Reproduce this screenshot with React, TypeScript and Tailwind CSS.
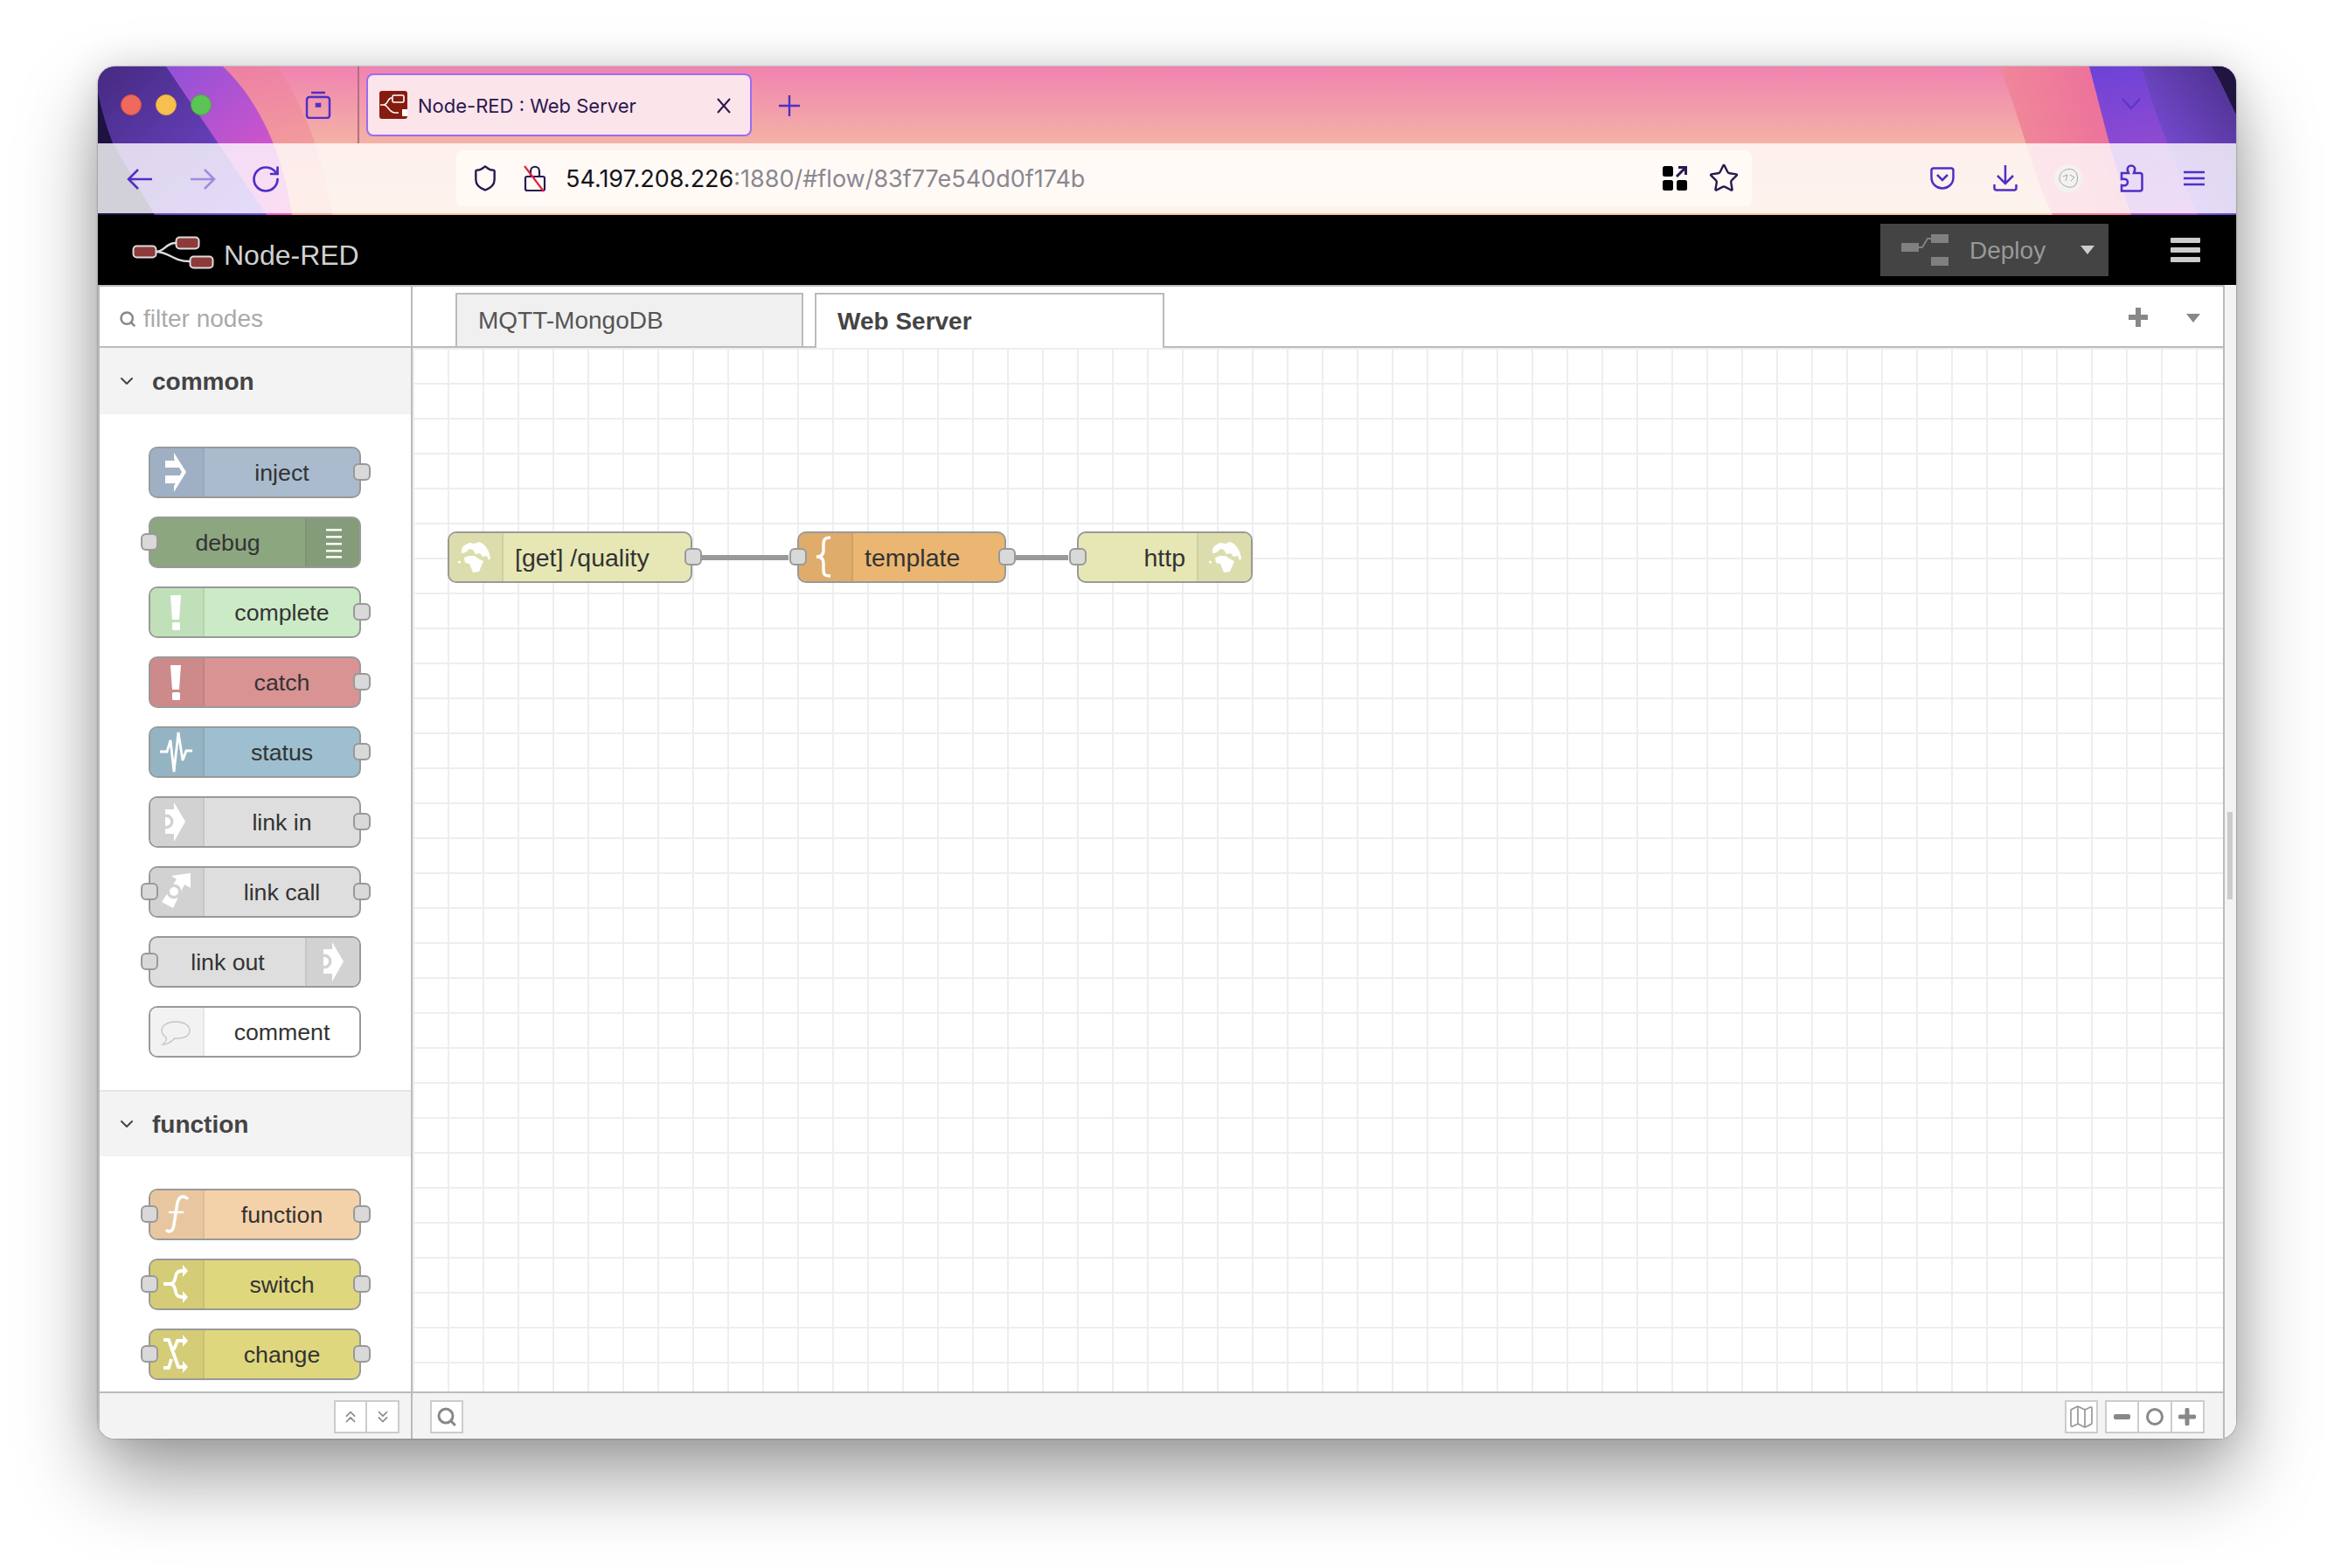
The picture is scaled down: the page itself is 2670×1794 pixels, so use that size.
import type { ReactNode } from 'react'
import { ChevronDown, ChevronsDown, ChevronsUp, Map as MapIcon, RotateCw, Search, Shield, Star } from 'lucide-react'

const sans = "font-['Liberation_Sans',Arial,sans-serif]"

const Globe = () => (
  <g fill="#fff">
    <path d="M16 20 L19 16 L25 13 L31 14 L36 12 C43 14 48 22 49 31 L47 33 L45 28 L40 29 L37 25 L32 26 L29 21 L25 20 L21 24 L16 25Z" />
    <path d="M19 30 L24 28 L31 28 L35 31 L41 34 L39 39 L36 46 L29 47 L27 42 L25 37 L20 36Z" />
    <circle cx="13.5" cy="35" r="1.6" />
  </g>
)

const LinkArrow = ({ bg }: { bg: string }) => (
  <g>
    <path d="M29 7 L42 29 L29 52 V43 H19 V15 H29Z" fill="#fff" />
    <circle cx="20" cy="29" r="8.5" fill={bg} />
    <path d="M19 24 H20 A5 5 0 0 1 20 34 H19Z" fill="#fff" />
    <rect x="10" y="10" width="9" height="40" fill={bg} />
  </g>
)

const icons: Record<string, (bg: string) => ReactNode> = {
  inject: () => (
    <g fill="#fff">
      <path d="M19 16 H33 L36 24 H19Z M19 33 H36 L33 42 H19Z" />
      <path d="M29 7 L43 29 L29 52 V45 L38 29 L29 14Z" />
    </g>
  ),
  debug: () => (
    <g fill="#fff">
      <rect x="22" y="14" width="18" height="2.5" />
      <rect x="22" y="22" width="18" height="2.5" />
      <rect x="22" y="30" width="18" height="2.5" />
      <rect x="22" y="38" width="18" height="2.5" />
      <rect x="22" y="45" width="18" height="2.5" />
    </g>
  ),
  alert: () => (
    <g fill="#fff">
      <path d="M25 10 H37 L35 38 H27Z" />
      <rect x="27" y="41" width="9" height="9" rx="1.5" />
    </g>
  ),
  status: () => (
    <path d="M13 29 H21 L25 16 L29 52 L34 7 L39 39 L43 28 H50" fill="none" stroke="#fff" strokeWidth="2.8" />
  ),
  link: bg => <LinkArrow bg={bg} />,
  linkCall: bg => (
    <g>
      <path d="M26 11 L48 8 L48 25 L41 21 L28 48 L15 41 L32 15Z" fill="#fff" />
      <circle cx="29" cy="29" r="8.5" fill={bg} />
      <circle cx="29" cy="29" r="5" fill="#fff" />
    </g>
  ),
  comment: () => (
    <path
      d="M31 18 C40 18 47 22 47 28 C47 34 40 38 30 37 C26 41 21 44 16 44 C19 42 21 39 20 36 C17 34 15 31 15 28 C15 22 22 18 31 18Z"
      fill="none"
      stroke="#c4c4c4"
      strokeWidth="1.3"
    />
  ),
  fn: () => (
    <g fill="none" stroke="#fff" strokeWidth="3.5" strokeLinecap="round">
      <path d="M44 11 C39 7 35 9 33 16 L29 41 C28 49 24 50 21 48" />
      <path d="M24 27 H39" strokeWidth="2.6" />
    </g>
  ),
  switch: () => (
    <g>
      <path
        d="M17 29 H24 C29 29 30 25 31 20 C32 15 34 14 40 14 M24 29 C29 29 30 33 31 38 C32 43 34 44 40 44"
        fill="none"
        stroke="#fff"
        strokeWidth="3.8"
      />
      <path d="M39 7 L45 14 L39 21Z M39 37 L45 44 L39 51Z" fill="#fff" />
    </g>
  ),
  change: () => (
    <g>
      <path
        d="M17 13 H23 L34 44 H40 M17 45 H23 L26 35 M29 24 L33 14 H40"
        fill="none"
        stroke="#fff"
        strokeWidth="3.8"
      />
      <path d="M39 7 L45 14 L39 21Z M39 37 L45 44 L39 51Z" fill="#fff" />
    </g>
  ),
  template: () => (
    <path
      d="M38 7 C31 7 30 10 30 15 V22 C30 27 27 29 22 29 C27 29 30 31 30 36 V44 C30 49 31 51 38 51"
      fill="none"
      stroke="#fff"
      strokeWidth="3.5"
    />
  ),
  globe: () => <Globe />,
}

interface NodeProps {
  label: string
  fill: string
  iconFill: string
  divider: string
  icon: string
  iconSide?: 'left' | 'right'
  inPort?: boolean
  outPort?: boolean
  labelClass?: string
}

const Port = ({ side }: { side: 'left' | 'right' }) => (
  <div
    className={`absolute top-[19px] h-[20px] w-[20px] rounded-[6px] border-2 border-[#999] bg-[#d9d9d9] ${
      side === 'left' ? 'left-[-9px]' : 'right-[-11px]'
    }`}
  />
)

const FlowNode = ({
  label,
  fill,
  iconFill,
  divider,
  icon,
  iconSide = 'left',
  inPort,
  outPort,
  labelClass = 'px-[17px] text-center text-[26.7px]',
}: NodeProps) => {
  const box = (
    <div
      className={`h-full w-[62px] shrink-0 ${iconSide === 'left' ? 'border-r-2' : 'border-l-2'}`}
      style={{ backgroundColor: iconFill, borderColor: divider }}
    >
      <svg viewBox="0 0 60 55" className="h-full w-full">
        <g transform={iconSide === 'left' ? 'translate(-2 -2)' : 'translate(0 -2)'}>{icons[icon](iconFill)}</g>
      </svg>
    </div>
  )
  return (
    <div className="relative h-[59px] w-full">
      <div
        className="flex h-full w-full items-center overflow-hidden rounded-[10px] border-2 border-[#999]"
        style={{ backgroundColor: fill }}
      >
        {iconSide === 'left' && box}
        <span className={`mt-[2px] flex-1 leading-none text-[#333] ${labelClass}`}>{label}</span>
        {iconSide === 'right' && box}
      </div>
      {inPort && <Port side="left" />}
      {outPort && <Port side="right" />}
    </div>
  )
}

const commonNodes: NodeProps[] = [
  { label: 'inject', fill: '#a9bbcd', iconFill: '#9fb0c4', divider: '#98a9bb', icon: 'inject', outPort: true },
  { label: 'debug', fill: '#8ca680', iconFill: '#849c79', divider: '#7d9573', icon: 'debug', iconSide: 'right', inPort: true },
  { label: 'complete', fill: '#cbeac6', iconFill: '#c0e0ba', divider: '#b5d4af', icon: 'alert', outPort: true },
  { label: 'catch', fill: '#d99393', iconFill: '#cd8a8a', divider: '#c28282', icon: 'alert', outPort: true },
  { label: 'status', fill: '#9dbfcf', iconFill: '#95b4c3', divider: '#8caab8', icon: 'status', outPort: true },
  { label: 'link in', fill: '#dedede', iconFill: '#d2d2d2', divider: '#c6c6c6', icon: 'link', outPort: true },
  { label: 'link call', fill: '#dedede', iconFill: '#d2d2d2', divider: '#c6c6c6', icon: 'linkCall', inPort: true, outPort: true },
  { label: 'link out', fill: '#dedede', iconFill: '#d2d2d2', divider: '#c6c6c6', icon: 'link', iconSide: 'right', inPort: true },
  { label: 'comment', fill: '#ffffff', iconFill: '#f2f2f2', divider: '#e6e6e6', icon: 'comment' },
]

const functionNodes: NodeProps[] = [
  { label: 'function', fill: '#f4d2a9', iconFill: '#e8c7a0', divider: '#dcbc97', icon: 'fn', inPort: true, outPort: true },
  { label: 'switch', fill: '#dfd77d', iconFill: '#d4cc76', divider: '#c9c170', icon: 'switch', inPort: true, outPort: true },
  { label: 'change', fill: '#dfd77d', iconFill: '#d4cc76', divider: '#c9c170', icon: 'change', inPort: true, outPort: true },
]

const PaletteSection = ({ title, nodes, divided }: { title: string; nodes: NodeProps[]; divided?: boolean }) => (
  <section>
    <div className={`flex h-[76px] items-center bg-[#f3f3f3] pl-[19px] text-[#444] ${divided ? 'border-t-2 border-[#e6e6e6]' : ''}`}>
      <ChevronDown size={24} strokeWidth={2} />
      <span className="ml-[17px] mt-[2px] text-[28px] font-bold">{title}</span>
    </div>
    <div className="flex flex-col gap-[21px] py-[37px] pl-[56px] pr-[57px]">
      {nodes.map(node => (
        <FlowNode key={node.label} {...node} />
      ))}
    </div>
  </section>
)

const ToolButton = ({ children, className = '' }: { children: ReactNode; className?: string }) => (
  <div className={`flex h-[38px] items-center justify-center bg-white ${className}`}>{children}</div>
)

const ChromeBackdrop = () => (
  <svg viewBox="0 0 2446 170" preserveAspectRatio="none" className="absolute inset-0 h-full w-full">
    <defs>
      <linearGradient id="base" x1="0" y1="0" x2="0" y2="1">
        <stop offset="0" stopColor="#f083b0" />
        <stop offset="0.52" stopColor="#f4b2a6" />
        <stop offset="1" stopColor="#f8c4a4" />
      </linearGradient>
      <linearGradient id="purpleL" x1="0" y1="0" x2="1" y2="1">
        <stop offset="0" stopColor="#452a80" />
        <stop offset="1" stopColor="#7a4ce0" />
      </linearGradient>
      <linearGradient id="magentaL" x1="0" y1="0" x2="1" y2="1">
        <stop offset="0" stopColor="#7c50dc" />
        <stop offset="1" stopColor="#f056c4" />
      </linearGradient>
      <linearGradient id="arcL" x1="0" y1="0" x2="0.3" y2="1">
        <stop offset="0" stopColor="#ec78a8" />
        <stop offset="1" stopColor="#f4a898" />
      </linearGradient>
      <linearGradient id="arcR" x1="0" y1="0.6" x2="1" y2="0.4">
        <stop offset="0" stopColor="#f08d98" />
        <stop offset="1" stopColor="#ea55a0" />
      </linearGradient>
      <linearGradient id="purpleR" x1="0" y1="0" x2="0.2" y2="1">
        <stop offset="0" stopColor="#6c42d8" />
        <stop offset="1" stopColor="#a850cc" />
      </linearGradient>
      <linearGradient id="darkR" x1="1" y1="0" x2="0.2" y2="1">
        <stop offset="0" stopColor="#4a2f88" />
        <stop offset="1" stopColor="#8655ee" />
      </linearGradient>
    </defs>
    <rect width="2446" height="170" fill="url(#base)" />
    <path d="M0 0 H205 C240 50 258 110 268 170 H0Z" fill="url(#arcL)" />
    <path d="M0 0 H143 C185 40 212 100 222 170 H0Z" fill="url(#magentaL)" />
    <path d="M0 0 H78 L193 170 H0Z" fill="url(#purpleL)" />
    <path d="M0 30 C4 50 10 70 17 88 L65 170 H0Z" fill="#1e1240" />
    <path d="M2175 0 H2446 V170 H2236 C2215 130 2200 60 2175 0Z" fill="url(#arcR)" />
    <path d="M2278 0 H2446 V170 H2326 C2308 120 2294 60 2278 0Z" fill="url(#purpleR)" />
    <path d="M2338 0 H2446 V170 H2402 C2380 120 2354 60 2338 0Z" fill="url(#darkR)" />
    <path d="M2418 0 H2446 V55 C2436 35 2428 15 2418 0Z" fill="#201440" />
  </svg>
)

const stroke = 'fill-none stroke-[#4f2fc6] [stroke-width:2.5]'

export default function App() {
  return (
    <div className={`h-[1794px] w-[2670px] overflow-hidden bg-white pl-[112px] pt-[76px] ${sans}`}>
      <div className="flex h-[1570px] w-[2446px] flex-col overflow-hidden rounded-[20px] shadow-[0_44px_90px_rgba(0,0,0,0.38),0_0_40px_rgba(0,0,0,0.12),0_0_2px_rgba(0,0,0,0.5)]">
        {/* browser chrome */}
        <div className="relative h-[170px] shrink-0">
          <ChromeBackdrop />
          <div className="relative flex h-[88px] items-center font-['Inter',sans-serif]">
            <div className="ml-[26px] h-[24px] w-[24px] rounded-full border border-[#d8503f] bg-[#ef6a5c]" />
            <div className="ml-[16px] h-[24px] w-[24px] rounded-full border border-[#e0a83c] bg-[#f6bf4f]" />
            <div className="ml-[16px] h-[24px] w-[24px] rounded-full border border-[#4aa83c] bg-[#5ac454]" />
            <svg viewBox="0 0 32 32" className={`ml-[106px] h-[32px] w-[32px] ${stroke}`}>
              <rect x="3" y="7" width="26" height="24" rx="3" />
              <path d="M8 2 H24" />
              <rect x="14" y="15" width="4" height="2.5" className="fill-[#4f2fc6]" />
            </svg>
            <div className="ml-[29px] h-full w-[2px] bg-[#b06f85]" />
            <div className="ml-[8px] flex h-[72px] w-[441px] items-center rounded-[8px] border-2 border-[#9a6cf2] bg-[#fbe4ea] pl-[13px]">
              <svg viewBox="0 0 32 32" className="h-[32px] w-[32px] shrink-0">
                <rect width="32" height="32" rx="3" fill="#861c0e" />
                <path d="M1 16 H5 C10 16 9 8 14 8 M5 16 C10 16 11 25 18 25 H22" fill="none" stroke="#fff" strokeWidth="1.6" />
                <rect x="15" y="5" width="13" height="8" rx="1.5" fill="none" stroke="#fff" strokeWidth="1.6" />
                <rect x="26" y="21" width="6" height="8" fill="#fff" />
              </svg>
              <span className="ml-[12px] mt-[2px] text-[22px] whitespace-nowrap text-[#2a1850]">Node-RED : Web Server</span>
              <svg viewBox="0 0 20 20" className="ml-auto mr-[20px] mt-[2px] h-[20px] w-[20px]">
                <path d="M3 2 L17 18 M17 2 L3 18" stroke="#2a1850" strokeWidth="2" />
              </svg>
            </div>
            <svg viewBox="0 0 24 24" className="ml-[31px] mt-[2px] h-[24px] w-[24px]">
              <path d="M12 0 V24 M0 12 H24" stroke="#4f2fc6" strokeWidth="2.4" />
            </svg>
            <svg viewBox="0 0 24 14" className={`absolute left-[2314px] top-[36px] h-[14px] w-[24px] ${stroke} opacity-70`}>
              <path d="M2 1 L12 12 L22 1" />
            </svg>
          </div>
          <div className="relative flex h-[80px] items-center bg-white/80 font-['Inter',sans-serif]">
            <div className="ml-[26px] mt-[2px] flex h-[44px] w-[44px] items-center justify-center">
              <svg viewBox="0 0 30 24" className={`h-[24px] w-[30px] ${stroke}`}>
                <path d="M29 12 H2 M13 1 L2 12 L13 23" />
              </svg>
            </div>
            <div className="ml-[28px] mt-[2px] flex h-[44px] w-[44px] items-center justify-center opacity-45">
              <svg viewBox="0 0 30 24" className={`h-[24px] w-[30px] ${stroke}`}>
                <path d="M1 12 H28 M17 1 L28 12 L17 23" />
              </svg>
            </div>
            <div className="ml-[28px] mt-[2px] flex h-[44px] w-[44px] items-center justify-center text-[#4f2fc6]">
              <RotateCw size={36} strokeWidth={1.8} />
            </div>
            <div className="ml-[196px] flex h-[64px] w-[1482px] items-center rounded-[8px] bg-[#fffaf6] pl-[17px] pr-[14px]">
              <Shield size={32} strokeWidth={1.8} className="text-[#2a1850]" />
              <svg viewBox="0 0 28 32" className="ml-[27px] h-[32px] w-[28px] fill-none stroke-[#2a1850] [stroke-width:2.2]">
                <path d="M9 14 V8 C9 1 19 1 19 8 V14" />
                <rect x="3" y="14" width="22" height="16" rx="2" />
                <path d="M2 2 L24 31" stroke="#e5213f" />
              </svg>
              <span className="ml-[21px] mt-[2px] text-[27px] whitespace-nowrap text-[#15141a]">
                54.197.208.226<span className="text-[#8a8791]">:1880/#flow/83f77e540d0f174b</span>
              </span>
              <svg viewBox="0 0 28 28" className="ml-auto h-[28px] w-[28px]">
                <rect x="0" y="0" width="12" height="12" rx="2.5" fill="#000" />
                <rect x="0" y="16" width="12" height="12" rx="2.5" fill="#000" />
                <rect x="16" y="16" width="12" height="12" rx="2.5" fill="#000" />
                <path d="M16 12 L26 2 M18 1.5 H26.5 V10" fill="none" stroke="#2a1850" strokeWidth="3" />
              </svg>
              <Star size={36} strokeWidth={1.6} className="ml-[24px] text-[#2a1850]" />
            </div>
            <div className="ml-[196px] flex items-center gap-[28px]">
              <div className="flex h-[44px] w-[44px] items-center justify-center">
                <svg viewBox="0 0 28 26" className={`h-[26px] w-[28px] ${stroke}`}>
                  <path d="M4 1.5 H24 C25.500 1.500 26.500 2.500 26.500 4 V12 C26.500 20 20 24.500 14 24.500 C8 24.500 1.500 20 1.500 12 V4 C1.500 2.500 2.500 1.500 4 1.500Z" />
                  <path d="M8 9 L14 15 L20 9" />
                </svg>
              </div>
              <div className="flex h-[44px] w-[44px] items-center justify-center">
                <svg viewBox="0 0 28 30" className={`h-[30px] w-[28px] ${stroke}`}>
                  <path d="M14 0 V21 M5 12 L14 21 L23 12 M1.500 22 V26 C1.500 27.500 2.500 28.500 4 28.500 H24 C25.500 28.500 26.500 27.500 26.500 26 V22" />
                </svg>
              </div>
              <div className="flex h-[44px] w-[44px] items-center justify-center">
                <svg viewBox="0 0 32 32" className="h-[32px] w-[32px]">
                  <circle cx="16" cy="16" r="16" fill="#f4f2f0" />
                  <path d="M6 18 C5 8 14 4 21 6 C28 9 28 20 23 25 C17 28 9 25 6 18Z M10 14 L15 12 L13 19 M18 12 L23 15 L19 19" fill="none" stroke="#a5a5a5" strokeWidth="1" />
                </svg>
              </div>
              <div className="flex h-[44px] w-[44px] items-center justify-center">
                <svg viewBox="0 0 28 32" className={`h-[32px] w-[28px] ${stroke}`}>
                  <path d="M3 10 H11 C8 4 11 1.500 14 1.500 C17 1.500 20 4 17 10 H24 C25.500 10 26.500 11 26.500 12.500 V28 C26.500 29.500 25.500 30.500 24 30.500 H3 V24 C8 25 10 23 10 20.500 C10 18 8 16 3 17Z" />
                </svg>
              </div>
              <div className="flex h-[44px] w-[44px] items-center justify-center">
                <svg viewBox="0 0 24 18" className={`h-[18px] w-[24px] ${stroke}`}>
                  <path d="M0 2 H24 M0 9 H24 M0 16 H24" />
                </svg>
              </div>
            </div>
          </div>
        </div>

        {/* node-red header */}
        <header className="flex h-[80px] shrink-0 items-center bg-black">
          <svg viewBox="152 274 94 38" className="ml-[39px] mt-[6px] h-[38px] w-[94px]">
            <path d="M179 292 C190 292 190 282 202 282 M179 292 C195 292 198 303 218 303" fill="none" stroke="#ddd" strokeWidth="2.4" />
            <rect x="153.500" y="285.500" width="26" height="13" rx="4" fill="#8f3a3a" stroke="#ddd" strokeWidth="2" />
            <rect x="202.500" y="275.500" width="26" height="13" rx="4" fill="#8f3a3a" stroke="#ddd" strokeWidth="2" />
            <rect x="218.500" y="297.500" width="26" height="13" rx="4" fill="#8f3a3a" stroke="#ddd" strokeWidth="2" />
          </svg>
          <span className="ml-[11px] mt-[12px] text-[32px] leading-none text-[#d0d0d0]">Node-RED</span>
          <div className="ml-auto flex h-[60px] w-[261px] items-center bg-[#444] pl-[24px]">
            <svg viewBox="0 0 54 36" className="h-[36px] w-[54px]">
              <rect x="0" y="10" width="20" height="10" fill="#808080" />
              <rect x="34" y="0" width="20" height="10" fill="#808080" />
              <rect x="34" y="26" width="20" height="10" fill="#808080" />
              <path d="M20 15 H24 L30 5 H34" fill="none" stroke="#808080" strokeWidth="2" />
            </svg>
            <span className="ml-[24px] mt-[2px] text-[28px] leading-none text-[#999]">Deploy</span>
            <svg viewBox="0 0 16 10" className="ml-[40px] h-[10px] w-[16px]">
              <path d="M0 0 H16 L8 10Z" fill="#ccc" />
            </svg>
          </div>
          <div className="ml-[71px] mr-[41px] flex w-[34px] flex-col gap-[5px]">
            <div className="h-[6px] rounded-[1px] bg-[#ccc]" />
            <div className="h-[6px] rounded-[1px] bg-[#ccc]" />
            <div className="h-[6px] rounded-[1px] bg-[#ccc]" />
          </div>
        </header>

        {/* editor */}
        <div className="flex min-h-0 flex-1 border-l-2 border-[#bbb] bg-[#f3f3f3]">
          <aside className="flex w-[358px] shrink-0 flex-col border-r-2 border-t-2 border-[#bbb] bg-white">
            <div className="flex h-[70px] shrink-0 items-center border-b-2 border-[#bbb] pl-[22px] pt-[5px]">
              <Search size={20} strokeWidth={3} className="text-[#888]" />
              <span className="ml-[8px] text-[28px] text-[#aaa]">filter nodes</span>
            </div>
            <div className="min-h-0 flex-1 overflow-hidden">
              <PaletteSection title="common" nodes={commonNodes} />
              <PaletteSection title="function" nodes={functionNodes} divided />
            </div>
            <div className="flex h-[54px] shrink-0 items-start justify-end border-t-2 border-[#bbb] bg-[#f3f3f3] pr-[13px] pt-[8px]">
              <ToolButton className="w-[38px] border-2 border-[#ccc]">
                <ChevronsUp size={22} strokeWidth={1.8} className="text-[#888]" />
              </ToolButton>
              <ToolButton className="ml-[-2px] w-[39px] border-2 border-[#ccc]">
                <ChevronsDown size={22} strokeWidth={1.8} className="text-[#888]" />
              </ToolButton>
            </div>
          </aside>

          <main className="flex min-w-0 w-[2071px] shrink-0 flex-col border-t-2 border-[#bbb] bg-white">
            <div className="flex h-[70px] shrink-0 items-start border-b-2 border-[#bbb] pl-[49px] pt-[7px]">
              <div className="flex h-[63px] w-[398px] items-center border-2 border-[#bbb] bg-[#f0f0f0] pl-[24px] text-[28px] text-[#555]">
                MQTT-MongoDB
              </div>
              <div className="relative ml-[13px] flex h-[63px] w-[400px] items-center border-x-2 border-t-2 border-[#bbb] bg-white pl-[24px] text-[28px] font-bold text-[#444]">
                Web Server
              </div>
              <svg viewBox="0 0 22 22" className="ml-[1103px] mt-[17px] h-[22px] w-[22px]">
                <path d="M11 1 V21 M1 11 H21" stroke="#888" strokeWidth="6" strokeLinecap="round" />
              </svg>
              <svg viewBox="0 0 16 10" className="ml-[44px] mt-[24px] h-[10px] w-[16px]">
                <path d="M0 0 H16 L8 10Z" fill="#888" />
              </svg>
            </div>

            <div className="relative min-h-0 flex-1 bg-[linear-gradient(to_right,#eee_2px,transparent_2px),linear-gradient(to_bottom,#eee_2px,transparent_2px)] bg-[size:40px_40px]">
              <div className="absolute left-[320px] top-[237px] h-[6px] w-[110px] bg-[#999]" />
              <div className="absolute left-[679px] top-[237px] h-[6px] w-[71px] bg-[#999]" />
              <div className="absolute left-[40px] top-[210px] w-[280px]">
                <FlowNode label="[get] /quality" fill="#e6e7b5" iconFill="#dcddac" divider="#cfd0a0" icon="globe" outPort labelClass="pl-[13px] text-left text-[28.5px]" />
              </div>
              <div className="absolute left-[440px] top-[210px] w-[239px]">
                <FlowNode label="template" fill="#ebb672" iconFill="#dfac6c" divider="#d0a065" icon="template" inPort outPort labelClass="pl-[13px] text-left text-[28.5px]" />
              </div>
              <div className="absolute left-[760px] top-[210px] w-[201px]">
                <FlowNode label="http" fill="#e6e7b5" iconFill="#dcddac" divider="#cfd0a0" icon="globe" iconSide="right" inPort labelClass="pr-[13px] text-right text-[28.5px]" />
              </div>
            </div>

            <div className="flex h-[54px] shrink-0 items-start border-t-2 border-[#bbb] bg-[#f3f3f3] pl-[20px] pr-[21px] pt-[8px]">
              <ToolButton className="w-[38px] border-2 border-[#ccc]">
                <Search size={24} strokeWidth={3} className="text-[#888]" />
              </ToolButton>
              <ToolButton className="ml-auto w-[38px] border-2 border-[#ccc]">
                <MapIcon size={32} strokeWidth={1.3} className="text-[#999]" />
              </ToolButton>
              <div className="ml-[8px] flex h-[38px] w-[114px] divide-x-2 divide-[#ccc] border-2 border-[#ccc] bg-white">
                <div className="flex flex-1 items-center justify-center">
                  <div className="h-[6px] w-[19px] rounded-[2px] bg-[#888]" />
                </div>
                <div className="flex flex-1 items-center justify-center">
                  <div className="h-[20px] w-[20px] rounded-full border-[3px] border-[#888]" />
                </div>
                <div className="flex flex-1 items-center justify-center">
                  <svg viewBox="0 0 20 20" className="h-[20px] w-[20px]">
                    <path d="M10 2 V18 M2 10 H18" stroke="#888" strokeWidth="5" strokeLinecap="round" />
                  </svg>
                </div>
              </div>
            </div>
          </main>

          {/* outer scrollbar strip */}
          <div className="relative flex-1 border-l-2 border-[#bbb] bg-[#f3f3f3]">
            <div className="absolute left-[3px] top-[603px] h-[100px] w-[6px] bg-[#ccc]" />
          </div>
        </div>
      </div>
    </div>
  )
}
